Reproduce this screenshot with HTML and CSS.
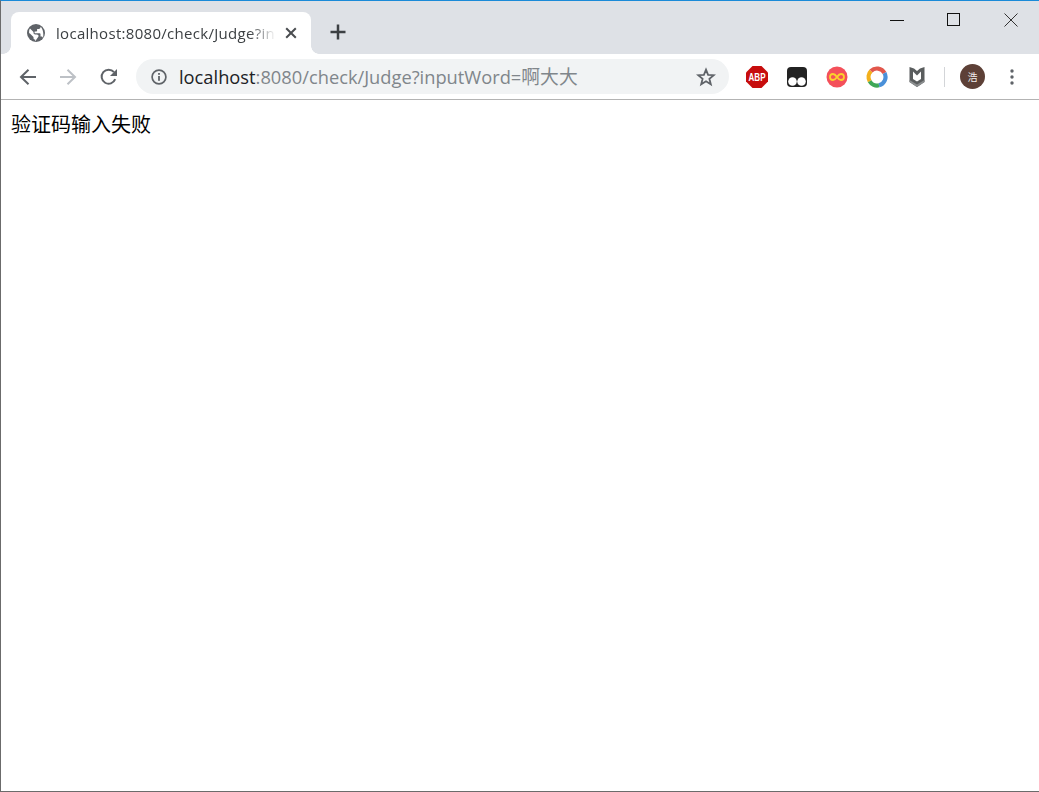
FILE: index.html
```html
<!DOCTYPE html>
<html lang="zh">
<head>
<meta charset="utf-8">
<title>localhost:8080/check/Judge?inputWord=啊大大</title>
<link rel="stylesheet" href="styles.css">
</head>
<body>
<div class="window">
  <header class="tabstrip">
    <div class="tab">
      <svg class="favicon" viewBox="0 0 18 18" width="18" height="18">
        <circle cx="9" cy="9" r="9" fill="#5f6368"/>
        <path d="M8.2 17.2V15.6c-.9 0-1.7-.8-1.7-1.7v-.8L2.4 9c-.2.6-.2 1.300-.2 1.300C2 7 2 6 3 4.500l3.500 3.500v.8c0 .9.8 1.700 1.700 1.700h1.700c1 0 1.700.8 1.700 1.700 0 0-3.300 5.200-3.400 5.200Z" fill="#fff"/>
        <path d="M13.500 2.800v.5c0 .9-.8 1.700-1.700 1.700H10.100v1.700c0 .5-.4.8-.9.8H7.600v1.700h5c.5 0 .9.400.9.900v2.500h.8c.8 0 1.400.5 1.600 1.200C16.900 12.500 16.500 5 13.500 2.800Z" fill="#fff"/>
      </svg>
      <span class="tab-title">localhost:8080/check/Judge?inputWord=啊大大</span>
      <svg class="tab-close" viewBox="0 0 12 12" width="12" height="12"><path d="M1.200 1.200 10.800 10.800M10.800 1.200 1.200 10.800" stroke="#4a4d50" stroke-width="2"/></svg>
    </div>
    <svg class="newtab" viewBox="0 0 16 16" width="16" height="16"><path d="M8 .5v15M.5 8h15" stroke="#3c4043" stroke-width="2.500"/></svg>
    <div class="winctl">
      <svg class="winbtn" viewBox="0 0 14 14" width="14" height="14"><path d="M0 7.500h14" stroke="#111" stroke-width="1"/></svg>
      <svg class="winbtn" viewBox="0 0 14 14" width="14" height="14"><rect x=".5" y=".5" width="12" height="12" fill="none" stroke="#111"/></svg>
      <svg class="winbtn" viewBox="0 0 14 14" width="14" height="14"><path d="M.5.500 13.500 13.500M13.500.500.500 13.500" stroke="#333" stroke-width="1"/></svg>
    </div>
  </header>

  <nav class="toolbar">
    <svg class="navicon" viewBox="0 0 18 18" width="18" height="18"><path d="M17 9H2.500M9.500 1.700 2 9l7.500 7.300" fill="none" stroke="#5f6368" stroke-width="2"/></svg>
    <svg class="navicon dim" viewBox="0 0 18 18" width="18" height="18"><path d="M1 9h14.500M8.500 1.700 16 9l-7.500 7.300" fill="none" stroke="#bdc1c6" stroke-width="2"/></svg>
    <svg class="navicon" viewBox="0 0 18 18" width="18" height="18"><path d="M16.200 11.200A7 7 0 1 1 15 4.200" fill="none" stroke="#5f6368" stroke-width="2"/><path d="M18 1v7h-7z" fill="#5f6368"/></svg>
    <div class="omnibox">
      <svg class="info" viewBox="0 0 16 16" width="16" height="16"><circle cx="8" cy="8" r="6.900" fill="none" stroke="#5f6368" stroke-width="1.700"/><rect x="7.100" y="7" width="1.800" height="4.800" fill="#5f6368"/><rect x="7.100" y="4" width="1.800" height="1.800" fill="#5f6368"/></svg>
      <span class="url"><span class="host">localhost</span>:8080/check/Judge?inputWord=<span class="cjk">啊大大</span></span>
      <svg class="star" viewBox="0 0 20 20" width="20" height="20"><path d="M10 2.600 12.100 7.800 17.800 8.200 13.400 11.800 14.800 17.300 10 14.300 5.200 17.300 6.600 11.800 2.200 8.200 7.900 7.800Z" fill="none" stroke="#5f6368" stroke-width="1.800"/></svg>
    </div>
    <div class="extensions">
      <svg class="ext" viewBox="0 0 22 22" width="22" height="22"><path d="M6.500 0h9L22 6.500v9L15.500 22h-9L0 15.500v-9Z" fill="#c70d0d"/><text x="11" y="15" class="abp" textLength="17" lengthAdjust="spacingAndGlyphs">ABP</text></svg>
      <svg class="ext" viewBox="0 0 22 22" width="22" height="22"><rect x="1" y="1" width="20" height="20" rx="4" fill="#222"/><circle cx="6.500" cy="15.500" r="4.300" fill="#fff"/><circle cx="15.500" cy="15.500" r="4.300" fill="#fff"/></svg>
      <svg class="ext" viewBox="0 0 22 22" width="22" height="22"><circle cx="11" cy="11" r="10.500" fill="#f4505a"/><path d="M11 11c-1.500-2.200-2.600-3-4-3a3 3 0 0 0 0 6c1.400 0 2.500-.8 4-3s2.600-3 4-3a3 3 0 0 1 0 6c-1.400 0-2.500-.8-4-3Z" fill="none" stroke="#fbd22c" stroke-width="1.800"/></svg>
      <svg class="ext" viewBox="0 0 22 22" width="22" height="22">
        <g fill="none" stroke-width="4.200">
          <path d="M3.700 15.200A8.500 8.500 0 0 1 5 5" stroke="#f3b01c"/>
          <path d="M5 5A8.500 8.500 0 0 1 18.500 7" stroke="#e2574c"/>
          <path d="M18.500 7A8.500 8.500 0 0 1 13 19.300" stroke="#4a90d9"/>
          <path d="M13 19.300A8.500 8.500 0 0 1 3.700 15.200" stroke="#3fa757"/>
        </g>
      </svg>
      <svg class="ext" viewBox="0 0 22 22" width="22" height="22"><path d="M3.500 1 8 2.500 11 5 14 2.500 18.500 1V16L11 21 3.500 16Z" fill="#5a5d5e"/><path d="M7 5.500 11 9.500 15 5.500V13L11 15.500 7 13Z" fill="#fff"/><path d="M3.500 14 11 18.500 18.500 14V16L11 21 3.500 16Z" fill="#8b8e8f"/></svg>
    </div>
    <span class="sep"></span>
    <span class="avatar">浩</span>
    <svg class="menu" viewBox="0 0 4 16" width="4" height="16"><circle cx="2" cy="2" r="1.700" fill="#5f6368"/><circle cx="2" cy="8" r="1.700" fill="#5f6368"/><circle cx="2" cy="14" r="1.700" fill="#5f6368"/></svg>
  </nav>

  <main class="page">验证码输入失败</main>
</div>
</body>
</html>
```
FILE: styles.css
```css
* { box-sizing: border-box; }
html, body { margin: 0; height: 100%; background: #fff; overflow: hidden; }
.window {
  height: 792px;
  display: flex;
  flex-direction: column;
  border-top: 1px solid #1a8ad8;
  border-left: 1px solid #6b6b6b;
  border-bottom: 1px solid #6b6b6b;
}
.tabstrip {
  height: 53px;
  flex: none;
  background: #dee1e6;
  display: flex;
  align-items: flex-end;
  padding-left: 10px;
}
.tab {
  position: relative;
  width: 300px;
  height: 42px;
  background: #fff;
  border-radius: 8px 8px 0 0;
  display: flex;
  align-items: center;
  padding: 0 14px 0 16px;
}
.tab::before, .tab::after {
  content: "";
  position: absolute;
  bottom: 0;
  width: 8px;
  height: 8px;
}
.tab::before { left: -8px; background: radial-gradient(circle at 0 0, #dee1e6 7.500px, #fff 8px); }
.tab::after { right: -8px; background: radial-gradient(circle at 100% 0, #dee1e6 7.500px, #fff 8px); }
.favicon { flex: none; margin-right: 11px; }
.tab-title {
  flex: 1;
  min-width: 0;
  margin-bottom: 2px;
  overflow: hidden;
  white-space: nowrap;
  font: 15px "Open Sans", "Noto Sans CJK SC", sans-serif;
  letter-spacing: .3px;
  color: #3c4043;
  -webkit-mask-image: linear-gradient(to right, #000 88%, transparent 100%);
  mask-image: linear-gradient(to right, #000 88%, transparent 100%);
}
.tab-close { flex: none; margin-left: 9px; }
.newtab { flex: none; margin: 0 0 14px 19px; }
.winctl {
  margin-left: auto;
  align-self: flex-start;
  display: flex;
  gap: 43px;
  padding: 12px 21px 0 0;
}
.winbtn { display: block; }
.toolbar {
  height: 46px;
  flex: none;
  background: #fff;
  border-bottom: 1px solid #b3b3b3;
  display: flex;
  align-items: center;
  padding: 0 18px 0 18px;
}
.navicon { flex: none; margin-right: 22px; }
.omnibox {
  flex: none;
  width: 593px;
  height: 35px;
  margin-left: -3px;
  border-radius: 18px;
  background: #f1f3f4;
  display: flex;
  align-items: center;
  padding: 0 13px 0 15px;
}
.info { flex: none; margin-right: 12px; }
.url {
  flex: 1;
  margin-bottom: 2px;
  white-space: nowrap;
  font: 18.3px "Open Sans", "Noto Sans CJK SC", sans-serif;
  color: #80868b;
}
.cjk { font-size: 18.8px; }
.host { color: #202124; }
.star { flex: none; }
.extensions {
  display: flex;
  gap: 18px;
  margin-left: 17px;
}
.ext { display: block; flex: none; }
.abp {
  font: 700 11.500px "Liberation Sans", sans-serif;
  fill: #fff;
  text-anchor: middle;
}
.sep {
  flex: none;
  width: 1px;
  height: 20px;
  background: #d3d5d8;
  margin-left: 16px;
}
.avatar {
  flex: none;
  width: 25px;
  height: 25px;
  margin-left: 15px;
  border-radius: 50%;
  background: #5d4037;
  color: #f2eeec;
  font: 10px/25px "Noto Sans CJK SC", sans-serif;
  text-align: center;
}
.menu { flex: none; margin-left: 25px; }
.page {
  flex: 1;
  padding: 10px 10px;
  font: 20px/28px "Noto Sans CJK SC", sans-serif;
  color: #000;
}
```
